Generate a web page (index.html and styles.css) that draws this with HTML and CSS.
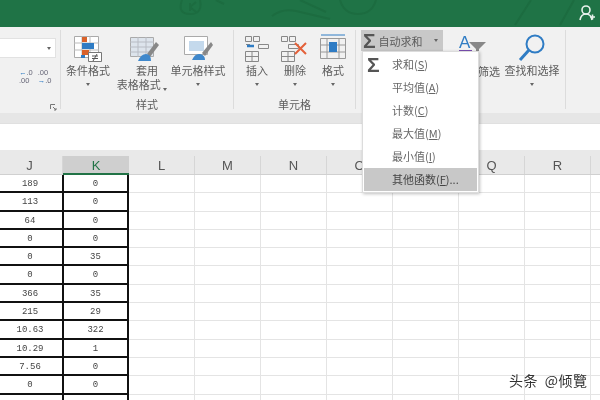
FILE: index.html
```html
<!DOCTYPE html>
<html lang="zh">
<head>
<meta charset="utf-8">
<title>Excel</title>
<link rel="stylesheet" href="styles.css">
</head>
<body>
<div class="app">
  <header class="title">
    <svg class="pattern" width="600" height="27" viewBox="0 0 600 27" fill="none" stroke="#1c6c40" stroke-width="2">
      <path d="M182 0q-5 14 8 14t10-14M190 3v8M190 7l6-5M190 7l6 5"/>
      <path d="M272 16q10-8 24-5l34 8M340 0q4 14 18 14t18-14M300 0l26 12M515 25l16-25M560 25l14-25M216 0l8 4"/>
    </svg>
    <svg class="user" width="16" height="18" viewBox="0 0 16 18" fill="none" stroke="#e8f1ec" stroke-width="1.6">
      <circle cx="7" cy="6" r="4"/><path d="M1 16q1-6 6-6t6 6M11 13h5M13.500 10.500v5"/>
    </svg>
  </header>
  <section class="ribbon">
    <div class="group g-num">
      <div class="num-top"><span class="combo"><i class="caret"></i></span></div>
      <div class="num-icons"><span class="dec"><em>←</em>.0<br>.00</span><span class="dec">.00<br><em>→</em>.0</span></div>
      <svg class="launcher" width="7" height="7" viewBox="0 0 7 7" fill="none" stroke="#777"><path d="M.5 5V.5H5M3 3l3 3M6 4v2H4"/></svg>
    </div>
    <div class="group g-style">
      <div class="tools">
        <div class="tool t1">
          <svg width="30" height="28" viewBox="0 0 30 28">
            <path d="M1.500 1.500h24v21h-24z" fill="#fff" stroke="#aaa"/><path d="M1 8h25M1 15h25M9 1v22M17 1v22" stroke="#bbb"/>
            <path d="M9 2h5v5H9z" fill="#d9622b"/><path d="M9 8h12v6H9z" fill="#2f7cc4"/><path d="M9 15h7v5H9z" fill="#d9622b"/><path d="M8 20h4v3H8z" fill="#2f7cc4"/>
            <path d="M15.500 17.500h13v9h-13z" fill="#fff" stroke="#777"/>
            <path d="M19 21h6M19 23.500h6M24 19l-4 7" stroke="#555" fill="none"/>
          </svg>
          <span>条件格式</span><i class="caret"></i>
        </div>
        <div class="tool t2">
          <svg width="30" height="28" viewBox="0 0 30 28">
            <path d="M1.500 2.500h23v19h-23z" fill="#dde4ec" stroke="#aaa"/><path d="M1 7h24M1 12h24M1 17h24M9 2v20M17 2v20" stroke="#b8bcc4"/>
            <path d="M27 7l-9 12 3 3 9-12z" fill="#888"/>
            <path d="M9 26q3-7 8-7t5 7z" fill="#3f88cc"/>
          </svg>
          <span>套用</span><span class="sub">表格格式 <i class="caret inline"></i></span>
        </div>
        <div class="tool t3">
          <svg width="30" height="28" viewBox="0 0 30 28">
            <path d="M1.500 1.500h23v18h-23z" fill="#fff" stroke="#aaa"/><path d="M6 6h15v10H6z" fill="#c4d9ec"/>
            <path d="M28 7l-9 11 3 3 8-11z" fill="#888"/>
            <path d="M9 25q3-7 8-6t5 6z" fill="#3f88cc"/>
          </svg>
          <span>单元格样式</span><i class="caret"></i>
        </div>
      </div>
      <div class="label">样式</div>
    </div>
    <div class="group g-cell">
      <div class="tools">
        <div class="tool t4">
          <svg width="26" height="28" viewBox="0 0 26 28" fill="none" stroke="#888">
            <path d="M1.500 1.500h6v5h-6zM9.500 1.500h6v5h-6zM2 9.500h4M14.500 9.500h10v4h-10z"/><path d="M1.500 16.500h13v10h-13zM8 16v11M1 21.500h14"/>
            <path d="M3 11h7" stroke="#2f7cc4" stroke-width="2.500"/>
          </svg>
          <span>插入</span><i class="caret"></i>
        </div>
        <div class="tool t5">
          <svg width="30" height="28" viewBox="0 0 30 28" fill="none" stroke="#888">
            <path d="M1.500 1.500h6v5h-6zM9.500 1.500h6v5h-6zM8.500 9.500h10v4h-10z"/><path d="M1.500 16.500h13v10h-13zM8 16v11M1 21.500h14"/>
            <path d="M15 8l11 11M26 8L15 19" stroke="#e4613a" stroke-width="2"/>
          </svg>
          <span>删除</span><i class="caret"></i>
        </div>
        <div class="tool t6">
          <svg width="28" height="30" viewBox="0 0 28 30" fill="none" stroke="#999">
            <path d="M1.500 5.500h25v20h-25zM8 5v21M20 5v21M1 12h26M1 19h26"/>
            <path d="M2 2h24" stroke="#2f7cc4"/><path d="M10 9h8v10h-8z" fill="#2f7cc4" stroke="none"/>
          </svg>
          <span>格式</span><i class="caret"></i>
        </div>
      </div>
      <div class="label">单元格</div>
    </div>
    <div class="group g-edit">
      <div class="autosum"><b class="sigma">Σ</b><span>自动求和</span><i class="caret"></i></div>
      <div class="edit-tools">
        <div class="sort">
          <svg width="34" height="26" viewBox="0 0 34 26">
            <text x="1" y="16" class="sort-a">A</text>
            <path d="M1 19h13" stroke="#7a4fb0" stroke-width="2"/>
            <path d="M11 10h17l-7 7v7l-3-2v-5z" fill="#888"/>
          </svg>
          <span>筛选</span>
        </div>
        <div class="tool t7">
          <svg width="30" height="30" viewBox="0 0 30 30" fill="none">
            <circle cx="18" cy="11" r="8.500" stroke="#2f7cc4" stroke-width="2"/>
            <path d="M12 17L3 27" stroke="#2f7cc4" stroke-width="3"/>
          </svg>
          <span>查找和选择</span><i class="caret"></i>
        </div>
      </div>
    </div>
  </section>
  <div class="strip"></div>
  <div class="formula"></div>
  <div class="gap"></div>
  <div class="heads">
    <span class="h hj">J</span><span class="h hk">K</span><span class="h">L</span><span class="h">M</span><span class="h">N</span><span class="h">O</span><span class="h">P</span><span class="h">Q</span><span class="h">R</span><span class="h"></span>
  </div>
  <div class="sheet">
    <div class="row"><span class="c j">189</span><span class="c k">0</span><span class="c"></span><span class="c"></span><span class="c"></span><span class="c"></span><span class="c"></span><span class="c"></span><span class="c"></span><span class="c"></span></div>
    <div class="row"><span class="c j">113</span><span class="c k">0</span><span class="c"></span><span class="c"></span><span class="c"></span><span class="c"></span><span class="c"></span><span class="c"></span><span class="c"></span><span class="c"></span></div>
    <div class="row"><span class="c j">64</span><span class="c k">0</span><span class="c"></span><span class="c"></span><span class="c"></span><span class="c"></span><span class="c"></span><span class="c"></span><span class="c"></span><span class="c"></span></div>
    <div class="row"><span class="c j">0</span><span class="c k">0</span><span class="c"></span><span class="c"></span><span class="c"></span><span class="c"></span><span class="c"></span><span class="c"></span><span class="c"></span><span class="c"></span></div>
    <div class="row"><span class="c j">0</span><span class="c k">35</span><span class="c"></span><span class="c"></span><span class="c"></span><span class="c"></span><span class="c"></span><span class="c"></span><span class="c"></span><span class="c"></span></div>
    <div class="row"><span class="c j">0</span><span class="c k">0</span><span class="c"></span><span class="c"></span><span class="c"></span><span class="c"></span><span class="c"></span><span class="c"></span><span class="c"></span><span class="c"></span></div>
    <div class="row"><span class="c j">366</span><span class="c k">35</span><span class="c"></span><span class="c"></span><span class="c"></span><span class="c"></span><span class="c"></span><span class="c"></span><span class="c"></span><span class="c"></span></div>
    <div class="row"><span class="c j">215</span><span class="c k">29</span><span class="c"></span><span class="c"></span><span class="c"></span><span class="c"></span><span class="c"></span><span class="c"></span><span class="c"></span><span class="c"></span></div>
    <div class="row"><span class="c j">10.63</span><span class="c k">322</span><span class="c"></span><span class="c"></span><span class="c"></span><span class="c"></span><span class="c"></span><span class="c"></span><span class="c"></span><span class="c"></span></div>
    <div class="row"><span class="c j">10.29</span><span class="c k">1</span><span class="c"></span><span class="c"></span><span class="c"></span><span class="c"></span><span class="c"></span><span class="c"></span><span class="c"></span><span class="c"></span></div>
    <div class="row"><span class="c j">7.56</span><span class="c k">0</span><span class="c"></span><span class="c"></span><span class="c"></span><span class="c"></span><span class="c"></span><span class="c"></span><span class="c"></span><span class="c"></span></div>
    <div class="row"><span class="c j">0</span><span class="c k">0</span><span class="c"></span><span class="c"></span><span class="c"></span><span class="c"></span><span class="c"></span><span class="c"></span><span class="c"></span><span class="c"></span></div>
    <div class="row"><span class="c j"></span><span class="c k"></span><span class="c"></span><span class="c"></span><span class="c"></span><span class="c"></span><span class="c"></span><span class="c"></span><span class="c"></span><span class="c"></span></div>
  </div>
  <ul class="menu">
    <li class="item"><b class="sigma big">Σ</b><span>求和(<u>S</u>)</span></li>
    <li class="item"><span>平均值(<u>A</u>)</span></li>
    <li class="item"><span>计数(<u>C</u>)</span></li>
    <li class="item"><span>最大值(<u>M</u>)</span></li>
    <li class="item"><span>最小值(<u>I</u>)</span></li>
    <li class="item active"><span>其他函数(<u>F</u>)...</span></li>
  </ul>
  <div class="mark">头条 @倾覽</div>
</div>
</body>
</html>
```

FILE: styles.css
```css
* { box-sizing: border-box; }
html, body { margin: 0; padding: 0; background: #fff; overflow: hidden; }
.app {
  position: relative;
  width: 600px;
  height: 400px;
  overflow: hidden;
  font-family: "Noto Sans CJK SC", "Liberation Sans", sans-serif;
  font-size: 11px;
  color: #5c5c5c;
  filter: blur(0.6px);
}
.title { position: relative; height: 27px; background: #1f7346; }
.pattern { position: absolute; left: 0; top: 0; }
.user { position: absolute; left: 579px; top: 4px; }

.ribbon { display: flex; height: 86px; background: #f1f1f1; padding-top: 3px; }
.group { position: relative; height: 79px; border-right: 1px solid #dcdcdc; }
.g-num { width: 61px; }
.g-style { width: 173px; }
.g-cell { width: 122px; }
.g-edit { width: 210px; }
.label { position: absolute; left: 0; right: 0; top: 67px; text-align: center; line-height: 14px; }

.num-top { padding-top: 8px; }
.combo { display: flex; align-items: center; justify-content: flex-end; width: 56px; height: 20px; padding-right: 4px; background: #fff; border: 1px solid #e2e2e2; border-left: 0; }
.num-icons { display: flex; gap: 5px; margin: 11px 0 0 19px; }
.dec { font: 7.5px/8px "Liberation Sans", sans-serif; color: #667; white-space: nowrap; }
.dec em { font-style: normal; color: #2f7cc4; }
.launcher { position: absolute; left: 50px; top: 74px; }

.caret { display: block; width: 0; height: 0; border: 2.5px solid transparent; border-top: 3px solid #666; border-bottom: 0; }
.caret.inline { display: inline-block; vertical-align: middle; }

.tools { display: flex; padding-top: 5px; }
.tool { display: flex; flex: none; flex-direction: column; align-items: center; line-height: 14px; white-space: nowrap; }
.tool svg { flex: none; }
.tool .caret { margin-top: 6px; }
.t1 { width: 54px; }
.t2 { width: 46px; margin-left: 9px; }
.t2 svg { margin-right: 6px; }
.t3 { width: 56px; }
.t4 { width: 46px; }
.t5 { width: 30px; }
.t6 { width: 46px; }
.t6 svg { margin-top: -2px; }
.t7 { width: 64px; padding-top: 3px; }
.sub { margin-left: -10px; }

.g-edit { display: flex; flex-direction: column; padding-left: 5px; }
.autosum { display: flex; align-items: center; width: 82px; height: 21px; background: #c8c8c8; padding-left: 2px; gap: 3px; }
.autosum span { white-space: nowrap; }
.autosum .caret { margin-left: 8px; }
.sigma { font: 700 21px/19px "Liberation Sans", sans-serif; color: #555; }
.edit-tools { position: absolute; left: 86px; top: 0; display: flex; }
.sort { width: 58px; padding: 2px 0 0 16px; position: relative; }
.sort span { position: absolute; left: 36px; top: 34px; line-height: 14px; }
.sort-a { font: 400 17px "Liberation Sans", sans-serif; fill: #2f7cc4; }

.strip { height: 10px; background: #e6e6e6; }
.formula { height: 27px; background: #fff; border-top: 1px solid #e0e0e0; }
.gap { height: 6px; background: #e9e9e9; }
.heads { display: flex; height: 19px; margin-left: -3px; background: #e9e9e9; border-bottom: 1px solid #d0d0d0; }
.h { flex: none; width: 66px; text-align: center; font: 13px/19px "Liberation Sans", sans-serif; color: #555; border-right: 1px solid #d6d6d6; }
.hk { background: #cfcfcf; border-bottom: 2px solid #217346; color: #217346; height: 19px; border-right: 0; }

.sheet { margin-left: -3px; }
.row { display: flex; height: 18.300px; }
.c { flex: none; width: 66px; height: 18.300px; border-right: 1px solid #e4e4e4; border-bottom: 1px solid #e4e4e4; font: 9px/18px "Liberation Mono", monospace; text-align: center; color: #444; }
.j, .k { border-color: #111; border-bottom-width: 2px; }
.j { border-right: 0; }
.k { width: 67px; margin-left: -1px; border-left: 2px solid #111; border-right: 2px solid #111; }

.menu { position: absolute; left: 362px; top: 51px; width: 117px; height: 142px; margin: 0; padding: 0 1px 1px; list-style: none; display: flex; flex-direction: column; background: #fff; border: 1px solid #dcdcdc; box-shadow: 1px 1px 3px rgba(0,0,0,.25); }
.item { position: relative; flex: 1; display: flex; align-items: center; padding-left: 28px; color: #666; white-space: nowrap; }
.item.active { background: #c8c8c8; color: #444; }
.big { position: absolute; left: 3px; top: 3px; }
.mark { position: absolute; left: 509px; top: 371px; font-size: 14px; line-height: 18px; color: #333; white-space: nowrap; word-spacing: 3px; letter-spacing: .5px; }
```
